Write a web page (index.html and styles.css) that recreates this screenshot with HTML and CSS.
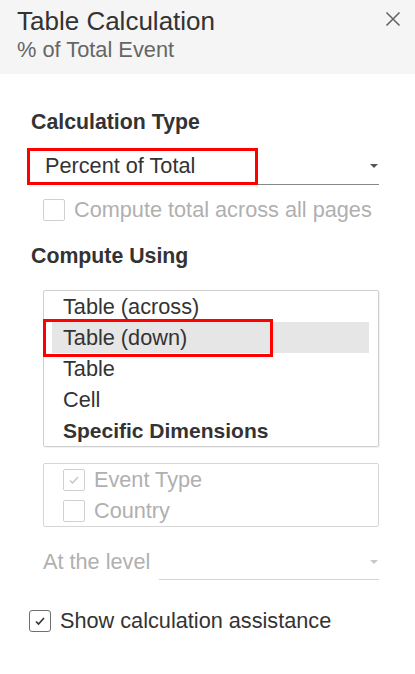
FILE: index.html
```html
<!DOCTYPE html>
<html>
<head>
<meta charset="utf-8">
<link rel="stylesheet" href="styles.css">
</head>
<body>
<div class="panel">
  <div class="header">
    <div class="titles">
      <div class="title">Table Calculation</div>
      <div class="subtitle">% of Total Event</div>
    </div>
    <svg class="close" width="16" height="16" viewBox="0 0 16 16"><path d="M1.5 1.5 L14.5 14.5 M14.5 1.5 L1.5 14.5" stroke="#666" stroke-width="1.6" fill="none"/></svg>
  </div>
  <div class="content">
    <div class="heading h-first">Calculation Type</div>
    <div class="dropdown indent">
      <span class="dd-text">Percent of Total</span>
      <span class="arrow"></span>
      <div class="redbox redbox-dd"></div>
    </div>
    <div class="check-row indent disabled compute-total">
      <span class="box"></span>
      <span>Compute total across all pages</span>
    </div>
    <div class="heading h-second">Compute Using</div>
    <div class="listbox indent">
      <div class="item">Table (across)</div>
      <div class="item selected">Table (down)<div class="redbox redbox-item"></div></div>
      <div class="item">Table</div>
      <div class="item">Cell</div>
      <div class="item bold">Specific Dimensions</div>
    </div>
    <div class="dimbox indent">
      <div class="check-row disabled dim-row">
        <span class="box"><svg width="20" height="20" viewBox="0 0 20 20"><path d="M6 10.5 L8.5 13 L14 7" stroke="#c4c4c4" stroke-width="1.4" fill="none"/></svg></span>
        <span>Event Type</span>
      </div>
      <div class="check-row disabled dim-row">
        <span class="box"></span>
        <span>Country</span>
      </div>
    </div>
    <div class="level-row indent">
      <span class="level-label">At the level</span>
      <div class="dropdown level-dd">
        <span class="dd-text"></span>
        <span class="arrow light"></span>
      </div>
    </div>
    <div class="check-row show-assist">
      <span class="box dark"><svg width="20" height="20" viewBox="0 0 20 20"><path d="M6 10.5 L8.5 13 L14 7" stroke="#333" stroke-width="1.6" fill="none"/></svg></span>
      <span>Show calculation assistance</span>
    </div>
  </div>
</div>
</body>
</html>
```

FILE: styles.css
```css
* { box-sizing: border-box; }
html, body { margin: 0; padding: 0; background: #fff; }
body {
  font-family: "Liberation Sans", Arial, sans-serif;
  color: #333;
  width: 415px;
}
.header {
  background: #f5f5f5;
  height: 74px;
  padding: 6px 14px 0 17px;
  display: flex;
  justify-content: space-between;
  align-items: flex-start;
}
.title { font-size: 26px; line-height: 30px; color: #333; }
.subtitle { font-size: 21.8px; line-height: 26px; color: #666; margin-top: 1px; }
.close { margin-top: 5px; }

.content { padding: 0 36px 0 31px; font-size: 21.7px; line-height: 24px; }
.indent { margin-left: 12px; }
.heading { font-weight: bold; color: #333; font-size: 21.3px; }
.h-first { margin-top: 36px; }
.h-second { margin-top: 22px; }

.dropdown {
  position: relative;
  display: flex;
  align-items: flex-start;
  justify-content: space-between;
  margin-top: 20px;
  padding: 0 2px 6px 2px;
  border-bottom: 1px solid #888;
  height: 31px;
}
.arrow {
  width: 0; height: 0;
  border-left: 4px solid transparent;
  border-right: 4px solid transparent;
  border-top: 4px solid #555;
  margin-top: 10px;
  margin-right: -1px;
}
.arrow.light { border-top-color: #c8c8c8; }

.redbox {
  position: absolute;
  border: 3px solid #f00;
  pointer-events: none;
}
.redbox-dd { left: -16px; top: -6px; width: 231px; height: 37px; }
.redbox-item { left: -9px; top: -3px; width: 230px; height: 38px; }

.check-row { display: flex; align-items: center; }
.check-row .box {
  width: 22px; height: 22px;
  border: 1px solid #d0d0d0;
  border-radius: 2px;
  background: #fff;
  margin-right: 9px;
  display: flex; align-items: center; justify-content: center;
  flex: none;
}
.check-row .box.dark { border: 1.5px solid #6f6f6f; border-radius: 3px; }
.disabled { color: #b0b0b0; }
.compute-total { margin-top: 13px; }

.listbox {
  margin-top: 22px;
  border: 1px solid #cfcfcf;
  border-radius: 2px;
  box-shadow: 1px 1px 1px rgba(0,0,0,0.06);
  padding: 0 9px 0 8px;
  height: 157px;
}
.item {
  position: relative;
  height: 31px;
  line-height: 31px;
  padding-left: 11px;
  color: #333;
}
.item.selected { background: #e6e6e6; }
.item.bold { font-weight: bold; font-size: 21px; }

.dimbox {
  margin-top: 16px;
  border: 1px solid #d6d6d6;
  border-radius: 2px;
  height: 64px;
  padding-left: 19px;
}
.dim-row { height: 31px; }

.level-row { display: flex; margin-top: 23px; align-items: flex-start; }
.level-label { color: #b0b0b0; width: 116px; flex: none; }
.level-dd { margin-top: 0; flex: 1; border-bottom-color: #d4d4d4; height: 30px; }

.show-assist { margin-top: 29px; margin-left: -2px; line-height: 24px; }
```
